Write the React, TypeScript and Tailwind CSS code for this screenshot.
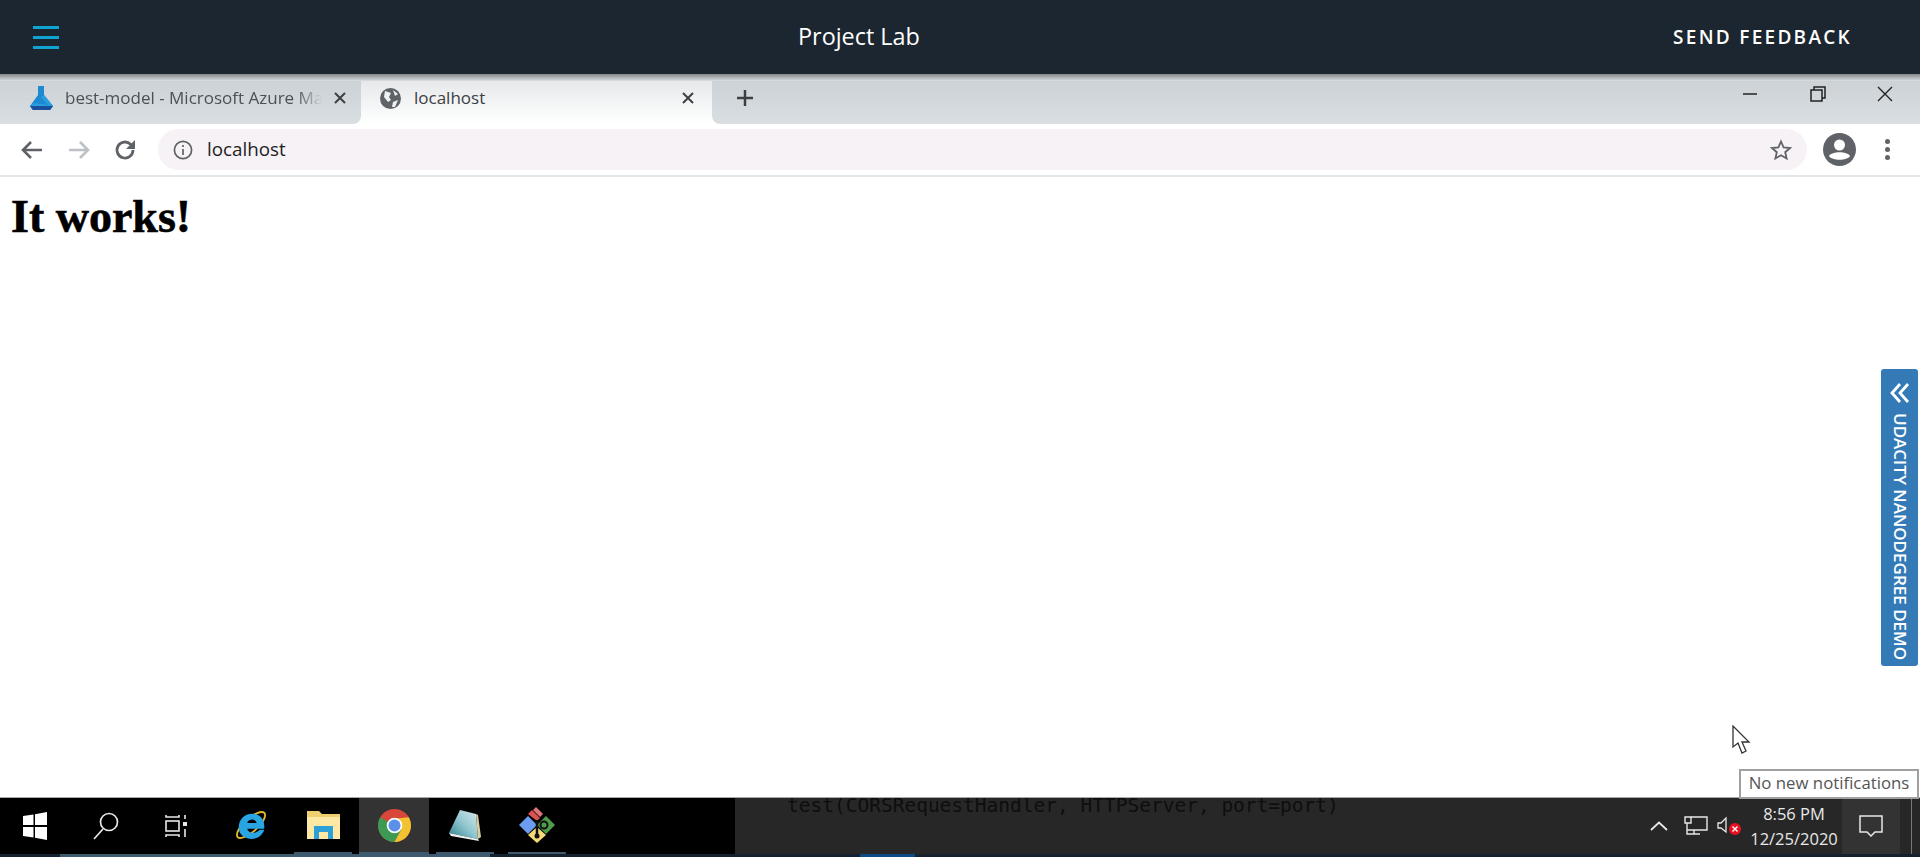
import React from "react";

const Chrome = () => (
  <svg width="33" height="33" viewBox="0 0 34 34">
    <circle cx="17" cy="17" r="17" fill="#d9473b" />
    <path d="M17 17 L2.3 8.5 A17 17 0 0 0 17 34 L25.5 19 Z" fill="#3c9a52" />
    <path d="M17 17 L17 10 L31.7 8.5 A17 17 0 0 1 17 34 L24 21 Z" fill="#f2c230" />
    <circle cx="17" cy="17" r="8" fill="#fff" />
    <circle cx="17" cy="17" r="6.2" fill="#5b8fe8" />
  </svg>
);

const Ie = () => (
  <svg width="34" height="34" viewBox="0 0 36 36">
    <ellipse cx="18" cy="18" rx="19" ry="7" transform="rotate(-42 18 18)" fill="none" stroke="#e2b52c" strokeWidth="2" />
    <path d="M5 21C5 12 11 6 19 6C28 6 33 13 32 22H14C15 27 23 28 27 23H32C29 32 20 34 14 32C8 30 5 26 5 21ZM14 16H24C23 11 15 11 14 16Z" fill="#29a5e4" />
  </svg>
);

const Folder = () => (
  <svg width="33" height="28" viewBox="0 0 33 28">
    <path d="M0 0H12L15 3H33V28H0Z" fill="#f0cf70" />
    <path d="M0 6H33V28H0Z" fill="#fde8a4" />
    <path d="M7 28V15H26V28H21V21H12V28Z" fill="#2f9fd8" />
  </svg>
);

const Notepad = () => (
  <svg width="32" height="32" viewBox="0 0 32 32">
    <defs>
      <linearGradient id="note" x1="0" y1="1" x2="1" y2="0">
        <stop offset="0" stopColor="#2c7f8c" />
        <stop offset="0.5" stopColor="#8fc6cf" />
        <stop offset="1" stopColor="#dbe8ea" />
      </linearGradient>
    </defs>
    <path d="M11 1L27 5L29 30L0 24Z" fill="url(#note)" />
    <path d="M0 24L29 30L30 32L2 27Z" fill="#e8f0f0" />
    <path d="M27 5L29 30L32 28L29 6Z" fill="#d8cfa0" />
  </svg>
);

const GitLogo = () => (
  <svg width="36" height="36" viewBox="0 0 36 36">
    <path d="M14 3L17 0L24 7L21 10Z" fill="#e0737a" />
    <path d="M9 7L13 3L21 11L18 14Z" fill="#d9534f" />
    <path d="M9 9L18 18L9 27L0 18Z" fill="#6c9cf0" />
    <path d="M27 9L36 18L27 27L18 18Z" fill="#4f9d4a" />
    <path d="M18 20L27 28L18 36L9 28Z" fill="#f5d978" />
    <path d="M18 13L18 29" stroke="#111" strokeWidth="2.5" fill="none" />
    <circle cx="18" cy="29" r="2.5" fill="#111" />
    <circle cx="25" cy="18" r="3.5" fill="none" stroke="#111" strokeWidth="2" />
  </svg>
);

const TaskIcon = ({ children, active, bar }: { children: React.ReactNode; active?: boolean; bar: string }) => (
  <div className={active ? "flex h-full w-[70px] flex-col items-center bg-[#333]" : "flex h-full w-[72px] flex-col items-center"}>
    <div className="flex flex-1 items-center justify-center">{children}</div>
    <span className={bar} />
  </div>
);

export default function App() {
  return (
    <div className="relative flex h-[857px] w-[1920px] flex-col overflow-hidden bg-white font-['Open_Sans',sans-serif]">
      {/* Lab header */}
      <header className="flex h-[74px] shrink-0 items-center bg-[#1c2630] text-white">
        <button className="ml-[33px] flex w-[26px] flex-col gap-[7px]">
          <span className="h-[3px] bg-[#0fa3d1]" />
          <span className="h-[3px] bg-[#0fa3d1]" />
          <span className="h-[3px] bg-[#0fa3d1]" />
        </button>
        <div className="flex-1 pl-[739px] text-[23.4px]">Project Lab</div>
        <div className="mr-[68px] text-[19px] font-semibold tracking-[0.12em]">SEND FEEDBACK</div>
      </header>
      <div className="h-[7px] shrink-0 bg-gradient-to-b from-[#85888a] to-[#dde0e2]" />

      {/* Tab strip */}
      <div className="flex h-[43px] shrink-0 bg-white text-[17px]">
        <div className="flex h-full w-[361px] items-center rounded-br-[8px] bg-gradient-to-b from-[#ccd2d5] to-[#d9dee2] pb-[9px] pl-[30px]">
          <svg width="23" height="24" viewBox="0 0 23 24">
            <path d="M8 0H14V9L23 20L20 24H3L0 20L8 9Z" fill="#1b8ad0" />
            <path d="M11 11L14 9L23 20L20 24H3L0 20L4 17L18 19Z" fill="#2a9ee0" />
            <path d="M3 24L0 20H23L20 24Z" fill="#1a4f9c" />
          </svg>
          <span className="ml-[12px] w-[257px] overflow-hidden whitespace-nowrap text-[#4b5157] [mask-image:linear-gradient(to_right,black_90%,transparent)]">best-model - Microsoft Azure Ma</span>
          <svg className="ml-[12px]" width="12" height="12" viewBox="0 0 12 12">
            <path d="M1 1L11 11M11 1L1 11" stroke="#3c4043" strokeWidth="2" />
          </svg>
        </div>
        <div className="flex h-full w-[351px] items-center bg-gradient-to-b from-[#e6e9eb] to-white pb-[9px] pl-[19px]">
          <svg width="21" height="21" viewBox="0 0 21 21">
            <circle cx="10.5" cy="10.5" r="10.5" fill="#5f6368" />
            <path d="M5 3L11 5L9 9L11 12L8 14L4 9ZM13 2L18 6L15 8ZM13 14L18 12L15 19L12 19Z" fill="#eef0f2" />
          </svg>
          <span className="ml-[13px] w-[268px] text-[#3c4043]">localhost</span>
          <svg width="12" height="12" viewBox="0 0 12 12">
            <path d="M1 1L11 11M11 1L1 11" stroke="#3c4043" strokeWidth="2" />
          </svg>
        </div>
        <div className="flex h-full flex-1 items-center rounded-bl-[8px] bg-gradient-to-b from-[#ccd2d5] to-[#d9dee2] pl-[24px]">
          <svg className="mb-[9px]" width="18" height="18" viewBox="0 0 18 18">
            <path d="M9 1V17M1 9H17" stroke="#3c4043" strokeWidth="2.5" />
          </svg>
          <div className="mb-[17px] ml-auto flex items-center">
            <svg width="16" height="16" viewBox="0 0 16 16">
              <path d="M1 8H15" stroke="#222" strokeWidth="1.5" />
            </svg>
            <svg className="ml-[52px]" width="16" height="16" viewBox="0 0 16 16" fill="none" stroke="#222" strokeWidth="1.5">
              <path d="M4 4V1H15V12H12" />
              <rect x="1" y="4" width="11" height="11" />
            </svg>
            <svg className="ml-[51px] mr-[27px]" width="16" height="16" viewBox="0 0 16 16">
              <path d="M1 1L15 15M15 1L1 15" stroke="#222" strokeWidth="1.4" />
            </svg>
          </div>
        </div>
      </div>

      {/* Toolbar */}
      <div className="flex h-[53px] shrink-0 items-center border-b-2 border-[#e4e5ea] bg-white">
        <svg className="ml-[21px]" width="22" height="20" viewBox="0 0 22 20" fill="none" stroke="#5f6368" strokeWidth="2.6">
          <path d="M21 10H3M10 2L2 10L10 18" />
        </svg>
        <svg className="ml-[25px]" width="22" height="20" viewBox="0 0 22 20" fill="none" stroke="#bdc0c4" strokeWidth="2.6">
          <path d="M1 10H19M12 2L20 10L12 18" />
        </svg>
        <svg className="ml-[24px]" width="22" height="22" viewBox="0 0 22 22" fill="none" stroke="#5f6368" strokeWidth="2.8">
          <path d="M19 11A8 8 0 1 1 16.6 5.3L19 7.5" />
          <path d="M21 1V10H12Z" fill="#5f6368" stroke="none" />
        </svg>
        <div className="ml-[22px] flex h-[41px] w-[1649px] items-center rounded-full bg-[#f7f2f6] pl-[15px] pr-[15px] text-[18.8px] text-[#222]">
          <svg width="20" height="20" viewBox="0 0 20 20" fill="none" stroke="#5f6368" strokeWidth="1.7">
            <circle cx="10" cy="10" r="8.6" />
            <path d="M10 9V15M10 5V7" />
          </svg>
          <span className="ml-[14px] flex-1">localhost</span>
          <svg width="22" height="22" viewBox="0 0 22 22" fill="none" stroke="#5f6368" strokeWidth="1.8">
            <path d="M11 2.5L13.6 8.4L20 9L15.2 13.2L16.6 19.5L11 16.2L5.4 19.5L6.8 13.2L2 9L8.4 8.4Z" />
          </svg>
        </div>
        <svg className="ml-[16px]" width="33" height="33" viewBox="0 0 33 33">
          <circle cx="16.5" cy="16.5" r="16.5" fill="#5f6368" />
          <circle cx="16.5" cy="12" r="5.5" fill="#fff" />
          <path d="M6 23C9 18 24 18 27 23C24 28 9 28 6 23Z" fill="#fff" />
        </svg>
        <div className="ml-[29px] flex flex-col gap-[3px]">
          <span className="h-[5px] w-[5px] rounded-full bg-[#5f6368]" />
          <span className="h-[5px] w-[5px] rounded-full bg-[#5f6368]" />
          <span className="h-[5px] w-[5px] rounded-full bg-[#5f6368]" />
        </div>
      </div>

      {/* Page */}
      <main className="min-h-0 flex-1 border-b border-[#a9a9a9] bg-white pl-[11px] pt-[15px]">
        <h1 className="font-['Liberation_Serif',serif] text-[46px] leading-[50px] font-bold text-black [-webkit-text-stroke:0.6px_black]">It works!</h1>
      </main>

      {/* Taskbar */}
      <div className="flex h-[56px] shrink-0 items-center overflow-hidden bg-black text-white">
        <svg className="ml-[23px]" width="24" height="28" viewBox="0 0 24 28" fill="#fff">
          <path d="M0 4L10.5 2.5V13H0ZM12 2.2L24 0V13H12ZM0 15H10.5V25.5L0 24ZM12 15H24V28L12 25.7Z" />
        </svg>
        <svg className="ml-[46px]" width="26" height="28" viewBox="0 0 26 28" fill="none" stroke="#e8e8e8" strokeWidth="1.7">
          <circle cx="16" cy="10" r="8.5" />
          <path d="M10 17L1 27" />
        </svg>
        <svg className="ml-[45px]" width="24" height="26" viewBox="0 0 24 26" fill="none" stroke="#e8e8e8" strokeWidth="1.6">
          <path d="M2 2V4H15V2M2 24V22H15V24" />
          <rect x="2" y="8" width="13" height="10" />
          <path d="M21 2V6M21 16V24" />
          <rect x="19" y="9" width="4" height="4" fill="#e8e8e8" stroke="none" />
        </svg>
        <div className="ml-[27px] flex h-full">
          <TaskIcon bar="h-[2px] w-[58px]"><Ie /></TaskIcon>
          <TaskIcon bar="h-[2px] w-[58px] bg-[#3e5a6e]"><Folder /></TaskIcon>
          <TaskIcon active bar="h-[2px] w-[70px] bg-[#3e5a6e]"><Chrome /></TaskIcon>
          <TaskIcon bar="h-[2px] w-[58px] bg-[#3e5a6e]"><Notepad /></TaskIcon>
          <TaskIcon bar="h-[2px] w-[58px] bg-[#3e5a6e]"><GitLogo /></TaskIcon>
        </div>

        <div className="ml-[162px] flex h-full flex-1 bg-[#272727]">
          <div className="ml-[52px] font-['DejaVu_Sans_Mono',monospace] text-[19.5px] leading-[16px] text-[#0e0e0e]">
            test(CORSRequestHandler, HTTPServer, port=port)
          </div>
          <div className="ml-auto flex items-center">
            <svg width="18" height="10" viewBox="0 0 18 10" fill="none" stroke="#e8e8e8" strokeWidth="1.8">
              <path d="M1 9L9 1.5L17 9" />
            </svg>
            <svg className="ml-[16px]" width="24" height="20" viewBox="0 0 24 20" fill="none" stroke="#e8e8e8" strokeWidth="1.4">
              <path d="M7 1H23V14H3" />
              <path d="M1 1H7V7H1ZM3 7V18H16M10 14V18" />
            </svg>
            <svg className="ml-[9px]" width="26" height="20" viewBox="0 0 26 20">
              <path d="M1 7H4L9 2V16L4 12H1Z" fill="none" stroke="#e8e8e8" strokeWidth="1.3" />
              <circle cx="18" cy="13" r="6" fill="#e81123" />
              <path d="M15.5 10.5L20.5 15.5M20.5 10.5L15.5 15.5" stroke="#fff" strokeWidth="1.4" />
            </svg>
            <div className="ml-[3px] w-[96px] text-center text-[16.5px] leading-[25px] text-[#e8e8e8]">
              <div>8:56 PM</div>
              <div>12/25/2020</div>
            </div>
            <div className="flex h-[56px] w-[58px] items-center justify-center bg-[#333]">
              <svg width="24" height="22" viewBox="0 0 24 22" fill="none" stroke="#e8e8e8" strokeWidth="1.5">
                <path d="M1 1H23V17H16L12 21L8 17H1Z" />
              </svg>
            </div>
            <div className="ml-[11px] mr-[8px] h-[56px] w-[1px] bg-[#777]" />
          </div>
        </div>
      </div>
      <div className="flex h-[3px] shrink-0 bg-[#14212e]">
        <div className="ml-[60px] w-[430px] bg-[#3f5b70]" />
        <div className="ml-[370px] w-[55px] bg-[#0b4a86]" />
      </div>

      {/* Overlays */}
      <div className="absolute left-[1881px] top-[369px] flex h-[297px] w-[37px] flex-col items-center rounded-[3px] bg-[#337ab7] pt-[14px] text-white">
        <svg width="20" height="20" viewBox="0 0 20 20" fill="none" stroke="#fff" strokeWidth="2.8">
          <path d="M10 1L2 10L10 19M18 1L10 10L18 19" />
        </svg>
        <div className="mt-[10px] text-[17px] leading-[20px] font-semibold whitespace-nowrap [writing-mode:vertical-rl]">UDACITY NANODEGREE DEMO</div>
      </div>
      <svg className="absolute left-[1732px] top-[725px]" width="20" height="30" viewBox="0 0 20 30">
        <path d="M1 1V22L6 18L10 28L14 26L10 17H17Z" fill="#fff" stroke="#333" strokeWidth="1.3" />
      </svg>
      <div className="absolute left-[1739px] top-[769px] flex h-[30px] w-[180px] items-center justify-center border-2 border-[#a0a0a0] bg-white pb-[2px] text-[16.8px] whitespace-nowrap text-[#555]">
        No new notifications
      </div>
    </div>
  );
}
